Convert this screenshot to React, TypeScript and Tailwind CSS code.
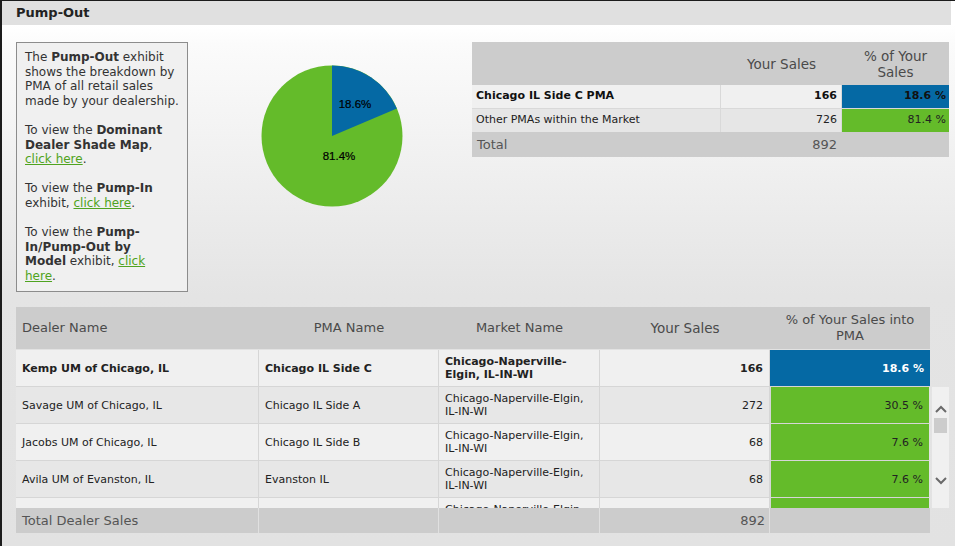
import React from "react";

const BLUE = "bg-[#0569a4]";
const GREEN = "bg-[#64bb2a]";

function Pie() {
  const cx = 71, cy = 71, r = 70.5;
  const frac = 0.186;
  const a = frac * 2 * Math.PI;
  const ex = cx + r * Math.sin(a);
  const ey = cy - r * Math.cos(a);
  return (
    <svg width="142" height="142" viewBox="0 0 142 142">
      <circle cx={cx} cy={cy} r={r} fill="#64bb2a" />
      <path d={`M${cx},${cy} L${cx},${cy - r} A${r},${r} 0 0 1 ${ex},${ey} Z`} fill="#0569a4" />
      <text x="94" y="43" textAnchor="middle" fontFamily="'Liberation Sans', Arial, sans-serif" fontSize="11.5" fill="#000" stroke="#000" strokeWidth="0.2">18.6%</text>
      <text x="78" y="95" textAnchor="middle" fontFamily="'Liberation Sans', Arial, sans-serif" fontSize="11.5" fill="#000" stroke="#000" strokeWidth="0.2">81.4%</text>
    </svg>
  );
}

function Link({ children }: { children: React.ReactNode }) {
  return <a className="text-[#4fa320] underline cursor-pointer">{children}</a>;
}

const rows = [
  { dealer: "Savage UM of Chicago, IL", pma: "Chicago IL Side A", sales: "272", pct: "30.5 %" },
  { dealer: "Jacobs UM of Chicago, IL", pma: "Chicago IL Side B", sales: "68", pct: "7.6 %" },
  { dealer: "Avila UM of Evanston, IL", pma: "Evanston IL", sales: "68", pct: "7.6 %" },
  { dealer: "", pma: "", sales: "", pct: "" },
];

function Chevron({ up }: { up?: boolean }) {
  return (
    <svg width="12" height="8" viewBox="0 0 12 8">
      <path d={up ? "M1,7 L6,2 L11,7" : "M1,1 L6,6 L11,1"} fill="none" stroke="#6a6a6a" strokeWidth="2" />
    </svg>
  );
}

export default function App() {
  const grid = "grid grid-cols-[243px_180px_161px_170px_160px]";
  const cell = "border-r border-b border-[#d6d6d6] flex items-center px-[6px] text-[11px] leading-[13px] text-[#222]";
  return (
    <div className="w-[955px] h-[546px] overflow-hidden bg-white border-t border-l-2 border-[#1c1c1c] font-['DejaVu_Sans',Verdana,sans-serif]">
      <div className="h-[24px] w-[949px] bg-[#e0e0e0] flex items-center px-[14px] text-[13px] font-bold text-[#222]">
        Pump-Out
      </div>
      <div className="h-[521px] bg-[linear-gradient(to_bottom,#ffffff_0px,#fbfbfb_20px,#e4e4e4_270px,#e2e2e2_521px)]">
        {/* top section */}
        <div className="flex items-start pt-[17px]">
          <div className="ml-[14px] w-[172px] h-[250px] border border-[#8c8c8c] bg-[#f0f0f0] pl-[8px] pt-[7px] text-[12px] leading-[14.6px] text-[#333] whitespace-nowrap">
            <p className="mb-[14.6px]">
              The <b>Pump-Out</b> exhibit<br />shows the breakdown by<br />PMA of all retail sales<br />made by your dealership.
            </p>
            <p className="mb-[14.6px]">
              To view the <b>Dominant</b><br /><b>Dealer Shade Map</b>,<br /><Link>click here</Link>.
            </p>
            <p className="mb-[14.6px]">
              To view the <b>Pump-In</b><br />exhibit, <Link>click here</Link>.
            </p>
            <p>
              To view the <b>Pump-</b><br /><b>In/Pump-Out by</b><br /><b>Model</b> exhibit, <Link>click<br />here</Link>.
            </p>
          </div>
          <div className="ml-[73px] mt-[23px]">
            <Pie />
          </div>
          <div className="ml-[69px] w-[477px]">
            <div className="grid grid-cols-[249px_121px_107px] h-[43px] bg-[#cccccc] text-[13.5px] leading-[16px] text-[#4a4a4a]">
              <div />
              <div className="flex items-center justify-center">Your Sales</div>
              <div className="flex items-center justify-center text-center">% of Your<br />Sales</div>
            </div>
            <div className="grid grid-cols-[249px_121px_107px] h-[24px] bg-[#f0f0f0] text-[11px] text-[#111] font-bold">
              <div className="flex items-center px-[4px] border-r border-b border-[#d9d9d9]">Chicago IL Side C PMA</div>
              <div className="flex items-center justify-end px-[4px] border-r border-b border-[#d9d9d9]">166</div>
              <div className={`flex items-center justify-end px-[3px] border-b border-[#d9d9d9] ${BLUE}`}>18.6 %</div>
            </div>
            <div className="grid grid-cols-[249px_121px_107px] h-[23px] bg-[#e6e6e6] text-[11px] text-[#222]">
              <div className="flex items-center px-[4px] border-r border-[#d9d9d9]">Other PMAs within the Market</div>
              <div className="flex items-center justify-end px-[4px] border-r border-[#d9d9d9]">726</div>
              <div className={`flex items-center justify-end px-[3px] ${GREEN}`}>81.4 %</div>
            </div>
            <div className="grid grid-cols-[249px_121px_107px] h-[25px] bg-[#cccccc] text-[13px] text-[#555]">
              <div className="flex items-center px-[5px]">Total</div>
              <div className="flex items-center justify-end px-[5px]">892</div>
              <div />
            </div>
          </div>
        </div>

        {/* bottom table */}
        <div className="ml-[14px] mt-[15px] w-[934px]">
          <div className={`${grid} h-[43px] bg-[#cccccc] text-[13px] leading-[16px] text-[#4a4a4a] border-b border-[#e2e2e2] w-[914px]`}>
            <div className="flex items-center px-[6px]">Dealer Name</div>
            <div className="flex items-center justify-center">PMA Name</div>
            <div className="flex items-center justify-center">Market Name</div>
            <div className="flex items-center justify-center text-[13.5px]">Your Sales</div>
            <div className="flex items-center justify-center text-center">% of Your Sales into<br />PMA</div>
          </div>
          <div className={`${grid} h-[37px] bg-[#f0f0f0] font-bold w-[914px]`}>
            <div className={cell}>Kemp UM of Chicago, IL</div>
            <div className={cell}>Chicago IL Side C</div>
            <div className={cell}>Chicago-Naperville-<br />Elgin, IL-IN-WI</div>
            <div className={`${cell} justify-end px-[4px]`}>166</div>
            <div className={`${cell} justify-end px-[3px] ${BLUE} text-white border-r-0`}>18.6 %</div>
          </div>
          <div className="flex items-start">
            <div className="w-[914px] h-[121px] overflow-hidden">
              {rows.map((r, i) => (
                <div key={i} className={`${grid} h-[37px] ${i % 2 === 0 ? "bg-[#e7e7e7]" : "bg-[#f0f0f0]"}`}>
                  <div className={cell}>{r.dealer}</div>
                  <div className={cell}>{r.pma}</div>
                  <div className={cell}>Chicago-Naperville-Elgin,<br />IL-IN-WI</div>
                  <div className={`${cell} justify-end px-[4px]`}>{r.sales}</div>
                  <div className={`${cell} justify-end px-[3px] ${GREEN} border-l border-l-[#d6d6d6] border-r-[#e2e2e2]`}>{r.pct}</div>
                </div>
              ))}
            </div>
            <div className="ml-[2px] w-[17px] h-[121px] bg-[#f0f0f0] flex flex-col items-center pt-[18px]">
              <Chevron up />
              <div className="mt-[5px] w-[13px] h-[15px] bg-[#cccccc]" />
              <div className="mt-[44px]">
                <Chevron />
              </div>
            </div>
          </div>
          <div className={`${grid} h-[25px] bg-[#cccccc] text-[13px] text-[#555] w-[914px]`}>
            <div className="flex items-center px-[6px] border-r border-[#e0e0e0]">Total Dealer Sales</div>
            <div className="border-r border-[#e0e0e0]" />
            <div className="border-r border-[#e0e0e0]" />
            <div className="flex items-center justify-end px-[4px] border-r border-[#e0e0e0]">892</div>
            <div />
          </div>
        </div>
      </div>
    </div>
  );
}
